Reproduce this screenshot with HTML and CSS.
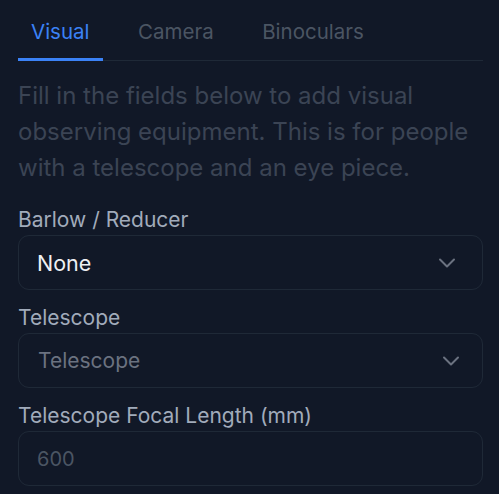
FILE: index.html
```html
<!DOCTYPE html>
<html lang="en">
<head>
<meta charset="utf-8">
<title>Equipment</title>
<link rel="stylesheet" href="styles.css">
</head>
<body>
<main class="panel">
  <nav class="tabs">
    <button class="tab tab--active" type="button">Visual</button>
    <button class="tab" type="button">Camera</button>
    <button class="tab" type="button">Binoculars</button>
  </nav>
  <p class="intro">Fill in the fields below to add visual observing equipment. This is for people with a telescope and an eye piece.</p>
  <div class="fields">
    <div class="field field--first">
      <label class="label">Barlow / Reducer</label>
      <div class="control control--select">
        <span class="value">None</span>
        <svg class="chevron" width="20" height="20" viewBox="0 0 20 20" aria-hidden="true"><polyline points="3 6.5 10 13.5 17 6.5" fill="none" stroke="currentColor" stroke-width="2" stroke-linecap="round" stroke-linejoin="round"/></svg>
      </div>
    </div>
    <div class="field">
      <label class="label">Telescope</label>
      <div class="control control--select control--native">
        <span class="value value--muted">Telescope</span>
        <svg class="chevron" width="20" height="20" viewBox="0 0 20 20" aria-hidden="true"><polyline points="3 6.5 10 13.5 17 6.5" fill="none" stroke="currentColor" stroke-width="2" stroke-linecap="round" stroke-linejoin="round"/></svg>
      </div>
    </div>
    <div class="field">
      <label class="label">Telescope Focal Length (mm)</label>
      <div class="control">
        <span class="value value--placeholder">600</span>
      </div>
    </div>
  </div>
</main>
</body>
</html>
```

FILE: styles.css
```css
html, body {
  margin: 0;
  padding: 0;
  background: #111827;
}

body {
  font-family: Inter, "Noto Sans", sans-serif;
  color: #e5e7eb;
}

.panel {
  padding: 0 16px 0 18px;
}

.tabs {
  display: flex;
  gap: 22.5px;
  border-bottom: 1px solid #1f2937;
}

.tab {
  font: 400 20.5px/28px Inter, sans-serif;
  color: #4b5563;
  background: none;
  border: 0;
  border-bottom: 3px solid transparent;
  margin: 0 0 -1px;
  padding: 18px 13px 12px;
  cursor: pointer;
}

.tab--active {
  color: #3b82f6;
  border-bottom-color: #3b82f6;
}

.intro {
  margin: 17px 0 0;
  font-size: 24px;
  line-height: 36px;
  color: #3b4454;
}

.fields {
  display: flex;
  flex-direction: column;
  gap: 14px;
  margin-top: 20px;
}

.field {
  display: flex;
  flex-direction: column;
  gap: 1px;
}

.label {
  font-size: 21px;
  line-height: 28px;
  color: #a1abbb;
}

.control {
  box-sizing: border-box;
  height: 55px;
  border: 1px solid #1f2937;
  border-radius: 11px;
  display: flex;
  align-items: center;
  justify-content: space-between;
  padding: 0 25px 0 18px;
}

.control--native {
  padding-right: 21px;
}

.value {
  font-size: 21.5px;
  line-height: 28px;
  font-weight: 400;
  color: #eef0f3;
}

.value--muted {
  font-size: 21px;
  color: #6b7280;
  padding-left: 1px;
}

.value--placeholder {
  font-size: 20px;
  color: #4b5563;
}

.chevron {
  color: #6b7280;
  display: block;
}
```
